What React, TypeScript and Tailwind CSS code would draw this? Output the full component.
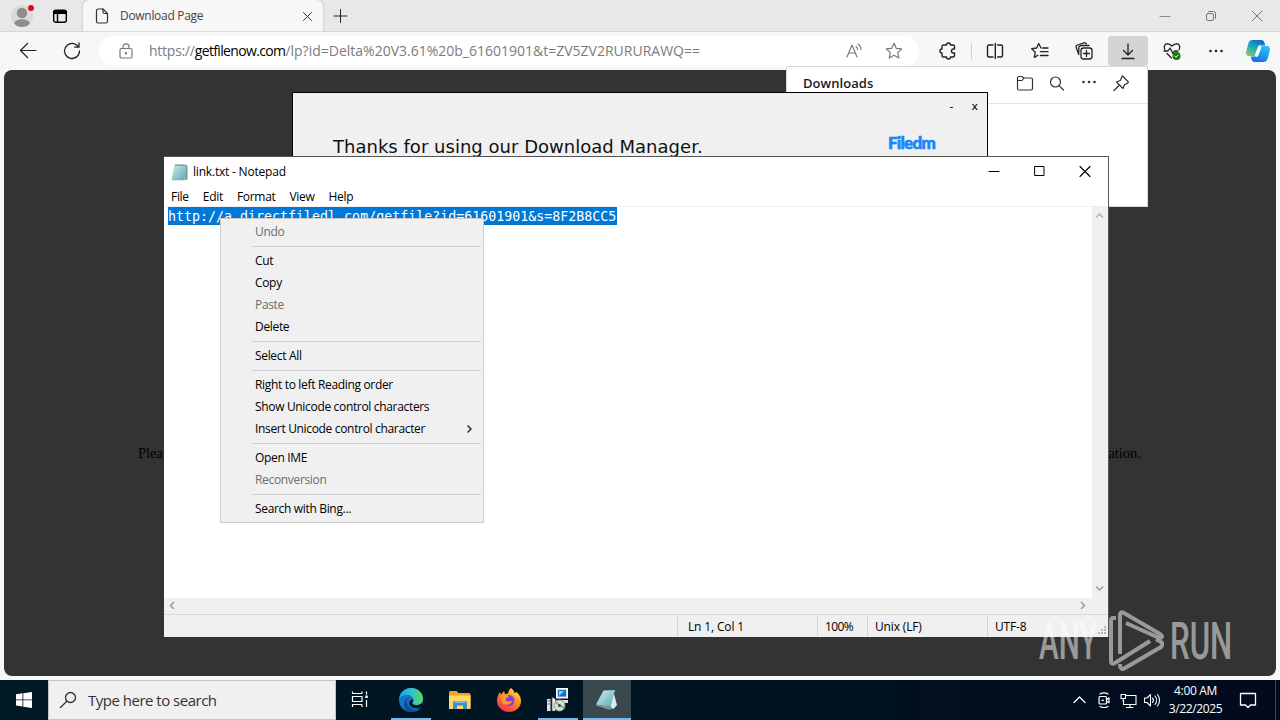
import type { ReactNode } from "react";

type MenuEntry = { label: string; disabled?: boolean; submenu?: boolean } | null;

// null is a separator
const contextMenu: MenuEntry[] = [
  { label: "Undo", disabled: true },
  null,
  { label: "Cut" },
  { label: "Copy" },
  { label: "Paste", disabled: true },
  { label: "Delete" },
  null,
  { label: "Select All" },
  null,
  { label: "Right to left Reading order" },
  { label: "Show Unicode control characters" },
  { label: "Insert Unicode control character", submenu: true },
  null,
  { label: "Open IME" },
  { label: "Reconversion", disabled: true },
  null,
  { label: "Search with Bing..." },
];

function Icon({
  children,
  size = 20,
  className = "",
  width = 1.2,
}: {
  children: ReactNode;
  size?: number;
  className?: string;
  width?: number;
}) {
  return (
    <svg
      width={size}
      height={size}
      viewBox={`0 0 ${size} ${size}`}
      fill="none"
      stroke="currentColor"
      strokeWidth={width}
      strokeLinecap="round"
      strokeLinejoin="round"
      className={`shrink-0 ${className}`}
    >
      {children}
    </svg>
  );
}

function Slot({ className, children }: { className: string; children?: ReactNode }) {
  return <div className={`flex h-full shrink-0 items-center justify-center ${className}`}>{children}</div>;
}

function TabBar() {
  return (
    <div className="flex h-8 items-center border-b border-[#d6d6d6] bg-[#e8e8e8]">
      <Slot className="w-11">
        <svg width="26" height="26" viewBox="0 0 26 26">
          <circle cx="13" cy="13" r="11" fill="#dcdad8" />
          <circle cx="13" cy="10" r="5.2" fill="#8f8c8a" />
          <path d="M5 20.5c1-3 4-4.3 8-4.3s7 1.300 8 4.300c-2 2.500-5 3.500-8 3.500s-6-1-8-3.500z" fill="#8f8c8a" />
          <circle cx="22" cy="5" r="3" fill="#e00b1c" />
        </svg>
      </Slot>
      <Slot className="w-8 text-black">
        <Icon size={16} width={1.4}>
          <rect x="1.700" y="2.200" width="12.600" height="12" rx="2" />
          <path d="M2 3.700h12M2 5h12" strokeWidth="1.800" />
          <path d="M5.500 5v9" />
        </Icon>
      </Slot>
      <div className="ml-[7px] flex h-8 w-60 items-center rounded-t-md bg-[#f7f7f7] shadow-[0_0_2px_rgba(0,0,0,0.3)] [clip-path:inset(-3px_-3px_0_-3px)]">
        <Icon size={16} className="ml-[11px] text-[#333]">
          <path d="M2.500 2.500a1.500 1.500 0 0 1 1.500-1.500h5l4.500 4.500v8a1.500 1.500 0 0 1-1.500 1.500h-8a1.500 1.500 0 0 1-1.500-1.500z" />
          <path d="M9 1v3a1.500 1.500 0 0 0 1.500 1.500h3" />
        </Icon>
        <span className="ml-2.5 flex-1 text-xs tracking-[-0.3px] text-[#444]">Download Page</span>
        <Icon size={16} className="mr-2 text-[#333]" width={1}>
          <path d="M4.500 4.500l8 8M12.500 4.500l-8 8" />
        </Icon>
      </div>
      <Slot className="w-[34px] text-[#222]">
        <Icon size={16} width={1}>
          <path d="M8.500 1.500v13M2 8h13" />
        </Icon>
      </Slot>
      <div className="flex-1" />
      <Slot className="w-[46px] text-[#8a8a8a]">
        <Icon size={12} width={1}>
          <path d="M1 6.500h10" />
        </Icon>
      </Slot>
      <Slot className="w-[46px] text-[#777]">
        <Icon size={12} width={1}>
          <rect x="1.500" y="3.500" width="7" height="7" rx="1.500" />
          <path d="M3.500 1.500h5a2 2 0 0 1 2 2v5" />
        </Icon>
      </Slot>
      <Slot className="w-[46px] text-[#777]">
        <Icon size={12} width={1}>
          <path d="M1 1l10 10M11 1l-10 10" />
        </Icon>
      </Slot>
    </div>
  );
}

function Copilot() {
  return (
    <svg width="26" height="26" viewBox="0 0 26 26">
      <defs>
        <linearGradient id="cpA" x1="0.800" y1="0" x2="0.200" y2="1">
          <stop offset="0" stopColor="#1462c8" />
          <stop offset="0.450" stopColor="#14a3c9" />
          <stop offset="1" stopColor="#7ccf5a" />
        </linearGradient>
        <linearGradient id="cpB" x1="0.800" y1="0" x2="0.200" y2="1">
          <stop offset="0" stopColor="#26c6f2" />
          <stop offset="1" stopColor="#1268e8" />
        </linearGradient>
      </defs>
      <path d="M7.500 2h8.500c2 0 3 1 3.500 3l.8 2.500h-3c-2 0-3 1-3.600 3l-1.500 5c-.6 2-1.600 2.500-3.500 2.500H4.500c-3 0-4-2-3.200-5l2.200-8C4.200 3 5.500 2 7.500 2z" fill="url(#cpA)" />
      <path d="M18.500 24H10c-2 0-3-1-3.500-3l-.8-2.500h3c2 0 3-1 3.600-3l1.500-5c.6-2 1.600-2.500 3.500-2.500h4.200c3 0 4 2 3.200 5l-2.200 8c-.7 2-2 3-4 3z" fill="url(#cpB)" />
      <path d="M14.700 9l-3 8" stroke="#fff" strokeWidth="3.500" strokeLinecap="round" />
    </svg>
  );
}

function Toolbar() {
  return (
    <div className="flex h-[38px] items-center bg-[#f7f7f7] text-[#222]">
      <Slot className="w-14">
        <Icon width={1.2}>
          <path d="M18 9.500H2.500M9.500 2.500L2.500 9.500l7 7" />
        </Icon>
      </Slot>
      <Slot className="w-[31px]">
        <Icon width={1.3}>
          <path d="M17.500 10a7.500 7.500 0 1 1-2.600-5.700l1.600 1.500M17 2v4.200h-4.300" />
        </Icon>
      </Slot>
      <div className="ml-3 flex h-[30px] w-[820px] items-center rounded-full bg-white">
        <Icon size={16} className="ml-[19px] text-[#777]">
          <rect x="2" y="5.500" width="12" height="9.500" rx="1.500" />
          <path d="M5 5.500V3.800a3 3 0 0 1 6 0v1.700" />
          <circle cx="8" cy="10.300" r="0.600" fill="currentColor" />
        </Icon>
        <span className="ml-[15px] flex-1 whitespace-nowrap text-sm text-[#7c7c7c]">
          <span className="tracking-[-0.25px]">https://</span>
          <span className="tracking-[-0.65px] text-black">getfilenow.com</span>
          <span>/lp?id=Delta%20V3.61%20b_61601901&amp;t=ZV5ZV2RURURAWQ==</span>
        </span>
        <Slot className="w-10 text-[#777]">
          <Icon width={1.1}>
            <path d="M3 16L8 4l5 12M4.700 12h6.600M12 5.500a4 4 0 0 1 1.500 3M14 3a7 7 0 0 1 3 5.500" />
          </Icon>
        </Slot>
        <Slot className="mr-[5px] w-10 text-[#777]">
          <Icon>
            <path d="M10 2.300l2.300 5 5.400.6-4 3.700 1.100 5.400-4.800-2.700-4.800 2.700 1.100-5.400-4-3.700 5.400-.6z" />
          </Icon>
        </Slot>
      </div>
      <Slot className="ml-[7px] w-11">
        <Icon width={1.4}>
          <path d="M5.500 4h3a2 2 0 0 1 4 0h2.500a1.500 1.500 0 0 1 1.500 1.500v2.500h-1a2 2 0 0 0 0 4h1v2.500a1.500 1.500 0 0 1-1.500 1.500h-2.500a2 2 0 0 1-4 0h-3A1.500 1.500 0 0 1 4 14.500v-2.500a2 2 0 0 1 0-4V5.500A1.500 1.500 0 0 1 5.500 4z" />
        </Icon>
      </Slot>
      <div className="ml-px h-4 w-px bg-[#cfcfcf]" />
      <Slot className="w-[46px]">
        <Icon width={1.4}>
          <path d="M8 4H4a1.500 1.500 0 0 0-1.500 1.500v9A1.500 1.500 0 0 0 4 16h4M12.500 4H16a1.500 1.500 0 0 1 1.500 1.500v9A1.500 1.500 0 0 1 16 16h-3.500M10.300 2.500v15" />
        </Icon>
      </Slot>
      <Slot className="w-11">
        <Icon width={1.3}>
          <path d="M11 7L8.700 2.500l-2 4.500-5 .7 3.600 3.500-1 5.200L8 14.300M12.500 7h5.500M10.500 10.700H18M10.500 14.500H18" />
        </Icon>
      </Slot>
      <Slot className="w-11">
        <Icon width={1.3}>
          <rect x="7" y="7" width="11" height="11" rx="2.500" />
          <path d="M12.500 9.500v6M9.500 12.500h6M4.800 13.500L2.200 6.500A2 2 0 0 1 3.500 4l6.500-2.200a2 2 0 0 1 2.400 1.200" />
          <path d="M4.800 12V7A2.500 2.500 0 0 1 7.300 4.500H15" />
        </Icon>
      </Slot>
      <Slot className="ml-0.5 w-10">
        <div className="flex h-[30px] w-10 items-center justify-center rounded bg-[#d3d3d3]">
          <Icon width={1.3}>
            <path d="M10 3v11M5.500 9.500L10 14l4.500-4.500M4 17.500h12" />
          </Icon>
        </div>
      </Slot>
      <Slot className="w-12">
        <Icon width={1.3}>
          <path d="M2.800 8.500C1 5 3.500 2.500 6 2.800c1.800.2 3 1.200 4 2.400 1-1.200 2.200-2.200 4-2.400 2.500-.3 5 2.200 3.200 5.700M2 10h4l2-3 3 5.500 1.500-2.500H16M5 12.500l4.500 4.500" />
          <circle cx="14.500" cy="15" r="4" fill="#107c10" stroke="none" />
          <path d="M12.700 15l1.300 1.300 2.300-2.400" stroke="#fff" strokeWidth="1" />
        </Icon>
      </Slot>
      <Slot className="w-10">
        <Dots />
      </Slot>
      <Slot className="w-[43px]">
        <Copilot />
      </Slot>
    </div>
  );
}

function Dots() {
  return (
    <svg width="16" height="4" viewBox="0 0 16 4" fill="currentColor">
      <circle cx="2.500" cy="2" r="1.300" />
      <circle cx="8" cy="2" r="1.300" />
      <circle cx="13.500" cy="2" r="1.300" />
    </svg>
  );
}

function DownloadsPanel() {
  return (
    <div className="absolute left-[786px] top-[66px] h-[141px] w-[362px] border border-[#d8d8d8] bg-white">
      <div className="flex h-[37px] items-center border-b border-[#e2e2e2] pl-4 pr-2.5 text-[#333]">
        <span className="flex-1 pb-0.5 text-[13px] font-semibold tracking-[0.05px] text-[#1b1b1b]">Downloads</span>
        <Slot className="w-8 pb-1">
          <Icon size={18}>
            <path d="M1.500 4a1.500 1.500 0 0 1 1.500-1.500h3l2 1.500h7a1.500 1.500 0 0 1 1.500 1.500v9a1.500 1.500 0 0 1-1.500 1.500H3a1.500 1.500 0 0 1-1.500-1.500zM1.500 6.500h4.500l2-2.500" />
          </Icon>
        </Slot>
        <Slot className="w-8 pb-1">
          <Icon size={16}>
            <circle cx="6.500" cy="7" r="5" />
            <path d="M10.300 10.800l4.200 4.200" />
          </Icon>
        </Slot>
        <Slot className="w-8 pb-1.5">
          <Dots />
        </Slot>
        <Slot className="w-8 pb-1">
          <Icon size={18}>
            <path d="M10.500 2l5.500 5.500c.6.600.3 1.300-.3 1.600l-3.200 1.600-1.500 3.800-6.500-6.500 3.800-1.500 1.400-3.200c.2-.6.500-1.500.8-1.300zM7 11.500L2 16.500" />
          </Icon>
        </Slot>
      </div>
    </div>
  );
}

function FiledmWindow() {
  return (
    <div className="absolute left-[292px] top-[92px] flex h-20 w-[696px] flex-col border border-black bg-[#f0f0f0]">
      <div className="flex h-7 shrink-0 items-center justify-end gap-[18px] pr-[9px] pt-px font-['DejaVu_Sans',sans-serif] text-[11px] text-black">
        <span>-</span>
        <span>x</span>
      </div>
      <div className="flex h-[52px] shrink-0 items-center justify-between pl-10 pr-[52px]">
        <span className="font-['DejaVu_Sans',sans-serif] text-lg tracking-[0.02px] text-[#111]">
          Thanks for using our Download Manager.
        </span>
        <span className="pb-[9px] font-[Lato,sans-serif] text-[17px] font-black tracking-[-0.75px] text-[#1788f8] [-webkit-text-stroke:0.6px_#1788f8]">
          Filedm
        </span>
      </div>
    </div>
  );
}

function NotepadIcon({ size }: { size: number }) {
  return (
    <svg width={size} height={size} viewBox="0 0 18 18">
      <defs>
        <linearGradient id="pad" x1="0" y1="0" x2="1" y2="1">
          <stop offset="0" stopColor="#d6f1f5" />
          <stop offset="1" stopColor="#58a5b5" />
        </linearGradient>
      </defs>
      <path d="M14.500 2l2 .5v14l-2.500.5z" fill="#7f969b" />
      <path d="M4 2h11l-1.500 15H1z" fill="url(#pad)" stroke="#7fa5ad" strokeWidth="0.500" />
      <path d="M4.500 2.200h10" stroke="#55666b" strokeWidth="1.500" strokeDasharray="1 1" />
      <path d="M3.500 6h9.500M3 8.500h9.500M2.700 11h9.500M2.400 13.500h9.500" stroke="#8cc8d3" strokeWidth="0.500" />
    </svg>
  );
}

function Chevron({ d, color }: { d: string; color: string }) {
  return (
    <svg width="9" height="9" viewBox="0 0 9 9" fill="none" stroke={color} strokeWidth="1.500">
      <path d={d} />
    </svg>
  );
}

function Notepad() {
  return (
    <div className="absolute left-[164px] top-[156px] flex h-[481px] w-[945px] flex-col border-r border-t border-[#555] bg-white text-black">
      <div className="flex h-[29px] items-center">
        <div className="ml-[7px]">
          <NotepadIcon size={18} />
        </div>
        <span className="ml-1 flex-1 pt-px text-xs tracking-[-0.2px]">link.txt - Notepad</span>
        <Slot className="w-[46px]">
          <Icon size={12} width={1}>
            <path d="M1 5.500h10" />
          </Icon>
        </Slot>
        <Slot className="w-[45px]">
          <Icon size={12} width={1}>
            <rect x="1" y="0.500" width="9" height="9" />
          </Icon>
        </Slot>
        <Slot className="w-[46px]">
          <Icon size={12} width={1.1}>
            <path d="M1 0.500l10 10M11 0.500L1 10.500" />
          </Icon>
        </Slot>
      </div>
      <div className="flex h-[21px] items-center gap-3.5 border-b border-[#f0f0f0] pl-[7px] pt-0.5 text-xs tracking-[-0.3px]">
        <span>File</span>
        <span>Edit</span>
        <span>Format</span>
        <span>View</span>
        <span>Help</span>
      </div>
      <div className="flex h-[391px]">
        <div className="flex-1 pl-1">
          <span className="block h-[18px] w-[449px] whitespace-nowrap bg-[#0078d7] font-['DejaVu_Sans_Mono',monospace] text-[13.3px] leading-5 text-white">
            http://a.directfiledl.com/getfile?id=61601901&amp;s=8F2B8CC5
          </span>
        </div>
        <div className="flex w-4 flex-col items-start justify-between bg-[#f0f0f0] px-[3px] py-[5px]">
          <Chevron d="M1 5.500l3.500-3.500 3.500 3.500" color="#b0b0b0" />
          <Chevron d="M1 2.500l3.500 3.500 3.500-3.500" color="#9b9b9b" />
        </div>
      </div>
      <div className="flex h-4 items-center justify-between bg-[#f0f0f0] pb-0.5 pl-1 pr-5">
        <Chevron d="M6 1L2.500 4.500l3.500 3.500" color="#9b9b9b" />
        <Chevron d="M2 1l3.500 3.500-3.500 3.500" color="#9b9b9b" />
      </div>
      <div className="flex h-[23px] items-center border-t border-[#d9d9d9] bg-[#f0f0f0] text-xs leading-[22px] tracking-[-0.15px]">
        <div className="w-[513px]" />
        <div className="h-5 w-[140px] border-l border-[#d4d4d4] pl-2.5">Ln 1, Col 1</div>
        <div className="h-5 w-[50px] border-l border-[#d4d4d4] pl-[7px] tracking-[-0.6px]">100%</div>
        <div className="h-5 w-[120px] border-l border-[#d4d4d4] pl-[7px]">Unix (LF)</div>
        <div className="h-5 flex-1 border-l border-[#d4d4d4] pl-[7px]">UTF-8</div>
        <svg width="12" height="12" viewBox="0 0 12 12" fill="#b4b4b4" className="self-end">
          <path d="M8 1h2v2H8zM8 4h2v2H8zM8 7h2v2H8zM5 4h2v2H5zM5 7h2v2H5zM2 7h2v2H2z" />
        </svg>
      </div>
    </div>
  );
}

function ContextMenu() {
  return (
    <div className="absolute left-[220px] top-[218px] w-[264px] border border-[#ccc] bg-[#f0f0f0] p-0.5 text-xs tracking-[-0.33px]">
      {contextMenu.map((entry, i) =>
        entry ? (
          <div
            key={i}
            className={`flex h-[22px] items-center justify-between pl-8 pr-[7px] ${entry.disabled ? "text-[#6d6d6d]" : "text-black"}`}
          >
            <span>{entry.label}</span>
            {entry.submenu && <Chevron d="M2.500 0.500l3.500 3.500-3.500 3.500" color="#333" />}
          </div>
        ) : (
          <div key={i} className="flex h-[7px] items-center pl-[29px]">
            <div className="h-px flex-1 bg-[#d0d0d0]" />
          </div>
        )
      )}
    </div>
  );
}

function Watermark() {
  return (
    <div className="absolute left-[1039px] top-[610px] flex h-[62px] w-[198px] items-center justify-between text-white opacity-50">
      <span className="w-[62px] origin-left translate-y-px scale-x-[0.57] font-[Roboto,sans-serif] text-[52px] font-medium leading-[62px]">
        ANY
      </span>
      <svg width="56" height="62" viewBox="0 0 56 62" fill="none" stroke="currentColor" strokeWidth="4" strokeLinejoin="round" className="shrink-0">
        <path d="M8 8H5q-2 0-2 3v40q0 4 4 2L42 31" />
        <path d="M12 44V5q0-4 4-2l36 21q4 3 0 4l-3-1L18 13" />
        <path d="M12 54q0 7 5 4l36-21q3-3 0-5l-5-3" />
      </svg>
      <span className="w-[67px] origin-left translate-y-px scale-x-[0.6] font-[Roboto,sans-serif] text-[52px] font-medium leading-[62px]">
        RUN
      </span>
    </div>
  );
}

function EdgeIcon() {
  return (
    <svg width="26" height="26" viewBox="0 0 26 26">
      <defs>
        <linearGradient id="edgeTop" x1="0" y1="0.500" x2="1" y2="0.500">
          <stop offset="0" stopColor="#1b9de2" />
          <stop offset="0.500" stopColor="#2bc3d2" />
          <stop offset="1" stopColor="#62d957" />
        </linearGradient>
      </defs>
      <circle cx="13" cy="13" r="12" fill="#1673c8" />
      <path d="M1 12C2 5 7 1 13 1c7 0 12 5 12 10.500 0 4-3 6.500-6.500 6.500-3 0-4.500-1.200-4-2.400.6-1 1-1.800.8-3C15 10 12.500 8 9.500 8 5.500 8 2 10 1 12z" fill="url(#edgeTop)" />
      <path d="M9 14c0 5 4 9 9 9 2 0 4-1 5-2-2 3-6 4-10 4-5 0-8-5-7-9 .5-3 3-5 5-5-1 1-2 2-2 3z" fill="#0c4f9c" />
      <path d="M15.300 12.500c.2 1.400-.4 2-.8 3-.5 1.500 1.500 2.700 4 2.700 2 0 3.800-.7 5-2l1 2.500c-2 2-4 2.800-7 2.600-4-.3-6.500-3-6.300-5.800.2-2 2-3.500 4.100-3z" fill="#001622" />
    </svg>
  );
}

function FolderIcon() {
  return (
    <svg width="24" height="24" viewBox="0 0 24 24">
      <path d="M1 4.500q0-1.500 1.500-1.500h6l2 2H21q1.500 0 1.500 1.500V20H1z" fill="#e9a820" />
      <path d="M1 7.500h21.500V21H1z" fill="#ffd667" />
      <path d="M5 21v-6q0-2 2-2h10q2 0 2 2v6h-4v-3.500H9V21z" fill="#3d8fcb" />
      <path d="M7 13h10v2H7z" fill="#73b9e8" />
    </svg>
  );
}

function FirefoxIcon() {
  return (
    <svg width="26" height="26" viewBox="0 0 26 26">
      <defs>
        <linearGradient id="fox" x1="0.800" y1="0" x2="0.200" y2="1">
          <stop offset="0" stopColor="#ffe34a" />
          <stop offset="0.450" stopColor="#ff8a1f" />
          <stop offset="1" stopColor="#f5225f" />
        </linearGradient>
      </defs>
      <path d="M15 1c2 1.500 3 3 3.500 5l2-1C24 8 25 11 25 14c0 6.500-5.500 11-12 11S1 20 1 14c0-4 1.500-7 3-9l1 2.500L8 4l1 3 3-.5C12.500 4 13.500 2 15 1z" fill="url(#fox)" />
      <circle cx="13" cy="13.500" r="5.500" fill="#8340d6" />
      <path d="M5 9c3-2 6-1.500 8 .5l-2.500 1.500c-1.500 1-1 3 1 3.500 2 .5 3-1 4.500-.5-1 3-4 4.500-7 3.500C6 16.500 4.500 13 5 9z" fill="#ff9a26" />
    </svg>
  );
}

function InstallerIcon() {
  return (
    <svg width="26" height="26" viewBox="0 0 26 26">
      <path d="M10 13h13v3H12z" fill="#e4e4e4" />
      <rect x="11.500" y="1.500" width="11" height="9.500" fill="#d9dde2" stroke="#fff" />
      <rect x="13" y="3" width="8" height="6.500" fill="#146fce" />
      <path d="M14 4h5l-5 5z" fill="#7cd0f6" />
      <path d="M2 12h3.500v12H2z" fill="#e2e4e8" />
      <path d="M2.500 14h3M2.500 17h3" stroke="#666" />
      <path d="M7 10l3.500 2v12H7z" fill="#f1f1f1" stroke="#444" strokeWidth="0.700" />
      <circle cx="14.500" cy="18.500" r="5.500" fill="#d5e3d2" stroke="#8b9894" />
      <path d="M14.500 18.500l-4-3.500M14.500 18.500l4.500 2" stroke="#839f7e" strokeWidth="1.500" />
      <circle cx="14.500" cy="18.500" r="1.500" fill="#3b4b52" />
    </svg>
  );
}

function TaskButton({ className, bar, children }: { className: string; bar?: string; children: ReactNode }) {
  return (
    <div className={`flex h-10 shrink-0 flex-col items-center ${className}`}>
      <div className="flex h-[38px] items-center pt-0.5">{children}</div>
      {bar && <div className={`h-0.5 bg-[#76b9ed] ${bar}`} />}
    </div>
  );
}

function Taskbar() {
  return (
    <div className="flex h-10 items-center bg-linear-to-r from-[#001a24] via-[#001422] to-[#020a1e] text-white">
      <Slot className="w-12">
        <svg width="16" height="16" viewBox="0 0 16 16" fill="#fff">
          <path d="M0 2.200l6.500-.9v6.200H0zM7.300 1.200L16 0v7.500H7.300zM0 8.300h6.500v6.200L0 13.600zM7.300 8.300H16V16l-8.700-1.200z" />
        </svg>
      </Slot>
      <div className="flex h-10 w-72 items-center border border-[#c4c4c4] bg-[#f0f0f0] text-[#333]">
        <Icon size={18} className="ml-2.5" width={1.3}>
          <circle cx="11.500" cy="6.500" r="5" />
          <path d="M7.800 10.200L1.500 16.500" />
        </Icon>
        <span className="ml-[11px] text-[15px] tracking-[-0.5px]">Type here to search</span>
      </div>
      <Slot className="w-12">
        <Icon size={18} width={1.2} className="-mt-0.5">
          <path d="M1.500 1.500v2h9.500v-2M1.500 6.500h9.500v5H1.500zM1.500 17v-2.500h9.500V17M15.500 1.500v3M15.500 10v7" strokeLinecap="butt" />
          <rect x="14.300" y="5.500" width="2.500" height="2.500" fill="currentColor" stroke="none" />
        </Icon>
      </Slot>
      <TaskButton className="ml-[3px] w-12" bar="w-10">
        <EdgeIcon />
      </TaskButton>
      <TaskButton className="w-[49px]">
        <FolderIcon />
      </TaskButton>
      <TaskButton className="w-[50px]">
        <FirefoxIcon />
      </TaskButton>
      <TaskButton className="w-12" bar="w-10">
        <InstallerIcon />
      </TaskButton>
      <TaskButton className="ml-px w-12 bg-[#39474f]" bar="w-12">
        <svg width="26" height="26" viewBox="0 0 26 26">
          <path d="M19 3.500l4 14.500-3.500 4-3-2z" fill="#dfe9ea" />
          <path d="M9.500 3.500l11.500-.5-4.500 17L2 17.500z" fill="url(#pad)" />
          <path d="M2 17.500l14.500 2.500 3 2-5 .5L2 18.500z" fill="#87969a" />
        </svg>
      </TaskButton>
      <div className="flex-1" />
      <Slot className="w-6">
        <Icon size={14} width={1.3}>
          <path d="M2 9.500L7.500 4l5.500 5.500" />
        </Icon>
      </Slot>
      <Slot className="w-[25px]">
        <Icon size={16}>
          <rect x="3" y="4.500" width="7.500" height="7.500" rx="1" />
          <path d="M10.500 7.800l2.500-2v5l-2.500-1.500M4 2q4-2.300 8 0M4 14.500q4 2.300 8 0" />
          <path d="M6 8.300h1.500" />
        </Icon>
      </Slot>
      <Slot className="w-6">
        <Icon size={17} width={1.1}>
          <path d="M6 3.500h10v9H3.500V8M10 12.500v3M6.500 15.500H13" />
          <path d="M1 2.500h4.500v4H1zM3.200 6.500V9" />
        </Icon>
      </Slot>
      <Slot className="w-6">
        <Icon size={18} width={1.1}>
          <path d="M1.500 7v4.500h2.500l3.500 3.500V3.500L4 7zM9.500 7a3.500 3.500 0 0 1 0 4.500M12 5a6.500 6.500 0 0 1 0 8.500M14.500 3.500a9 9 0 0 1 0 11.500" />
        </Icon>
      </Slot>
      <div className="flex w-[63px] flex-col items-center whitespace-nowrap text-xs leading-[18px] tracking-[-0.35px]">
        <span>4:00 AM</span>
        <span>3/22/2025</span>
      </div>
      <Slot className="w-[42px]">
        <Icon size={18} width={1.3}>
          <path d="M1.500 2.500h15v11.500h-5l-2.500 2.500-2.500-2.500h-5z" />
        </Icon>
      </Slot>
      <div className="ml-1.5 mr-1 h-10 w-px bg-[#3d4756]" />
    </div>
  );
}

export default function App() {
  return (
    <div className="relative flex h-[720px] w-[1280px] flex-col overflow-hidden bg-[#f7f7f7] font-['Open_Sans','Noto_Sans',sans-serif]">
      <TabBar />
      <Toolbar />
      <div className="mx-1 mb-1 flex flex-1 items-center rounded-lg bg-[#333]">
        <div className="flex flex-1 justify-between pl-[134px] pr-[135px] pt-[162px] font-['Liberation_Serif',serif] text-[14.5px] text-black">
          <span>Plea</span>
          <span>ation.</span>
        </div>
      </div>
      <Taskbar />
      <DownloadsPanel />
      <FiledmWindow />
      <Notepad />
      <ContextMenu />
      <Watermark />
    </div>
  );
}
